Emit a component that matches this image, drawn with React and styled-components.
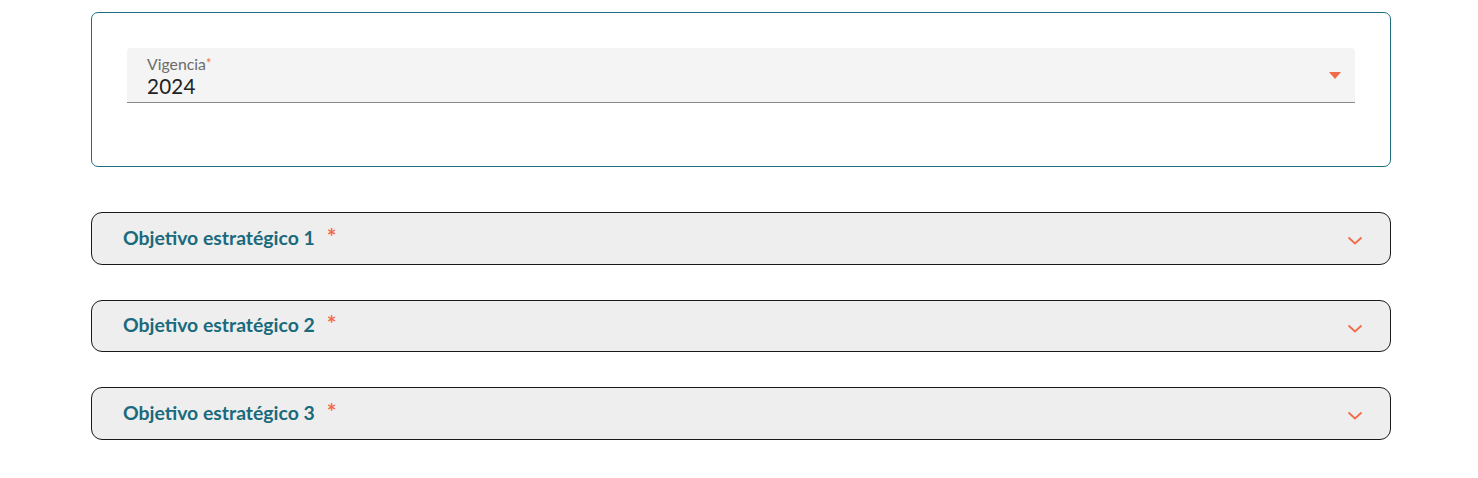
import React from "react";
import styled, { createGlobalStyle } from "styled-components";

const GlobalStyle = createGlobalStyle`
  body {
    margin: 0;
    background: #ffffff;
    font-family: Lato, "Open Sans", sans-serif;
  }
`;

const Page = styled.div`
  width: 1300px;
  padding: 12px 0 0 91px;
  display: flex;
  flex-direction: column;
`;

const Card = styled.section`
  box-sizing: border-box;
  height: 155px;
  border: 1px solid #1d6f80;
  border-radius: 7px;
  padding: 35px 35px 0 35px;
  margin-bottom: 45px;
`;

const Field = styled.div`
  position: relative;
  box-sizing: border-box;
  height: 55px;
  background: #f4f4f4;
  border-radius: 4px 4px 0 0;
  border-bottom: 1px solid #8a8a8a;
  padding: 6px 20px 0 20px;
  display: flex;
  flex-direction: column;
`;

const Label = styled.span`
  font-size: 15.8px;
  line-height: 18px;
  color: #6b6b6b;

  em {
    font-style: normal;
    color: #f07050;
    font-size: 13px;
    vertical-align: 2px;
  }
`;

const Value = styled.span`
  font-size: 20.6px;
  line-height: 26px;
  color: #222222;
  letter-spacing: 0.2px;
`;

const Caret = styled.div`
  position: absolute;
  right: 14px;
  top: 24px;
  width: 0;
  height: 0;
  border-left: 6px solid transparent;
  border-right: 6px solid transparent;
  border-top: 7px solid #f26b4b;
`;

const Accordion = styled.div`
  box-sizing: border-box;
  height: 52.5px;
  border: 1px solid #1a1a1a;
  border-radius: 11px;
  background: #eeeeee;
  display: flex;
  align-items: center;
  justify-content: space-between;
  padding: 0 27px 0 31px;
  margin-bottom: 35px;
`;

const Title = styled.h3`
  margin: 0;
  font-size: 19.4px;
  font-weight: 700;
  color: #196a7c;
  display: flex;
  align-items: flex-start;
  gap: 12px;
  margin-top: -2px;

  span {
    color: #f26b4b;
    font-size: 23px;
    font-weight: 700;
    line-height: 1;
    margin-top: -1px;
  }
`;

const Chevron = styled.svg`
  width: 16px;
  height: 16px;
  margin-top: 6px;
`;

const objectives = ["Objetivo estratégico 1", "Objetivo estratégico 2", "Objetivo estratégico 3"];

export default function App() {
  return (
    <>
      <GlobalStyle />
      <Page>
        <Card>
          <Field>
            <Label>
              Vigencia<em>*</em>
            </Label>
            <Value>2024</Value>
            <Caret />
          </Field>
        </Card>
        {objectives.map((o) => (
          <Accordion key={o}>
            <Title>
              {o}
              <span>*</span>
            </Title>
            <Chevron viewBox="0 0 16 16" fill="none">
              <path d="M1.5 4.5 L8 10.5 L14.5 4.5" stroke="#f26b4b" strokeWidth="1.8" />
            </Chevron>
          </Accordion>
        ))}
      </Page>
    </>
  );
}
